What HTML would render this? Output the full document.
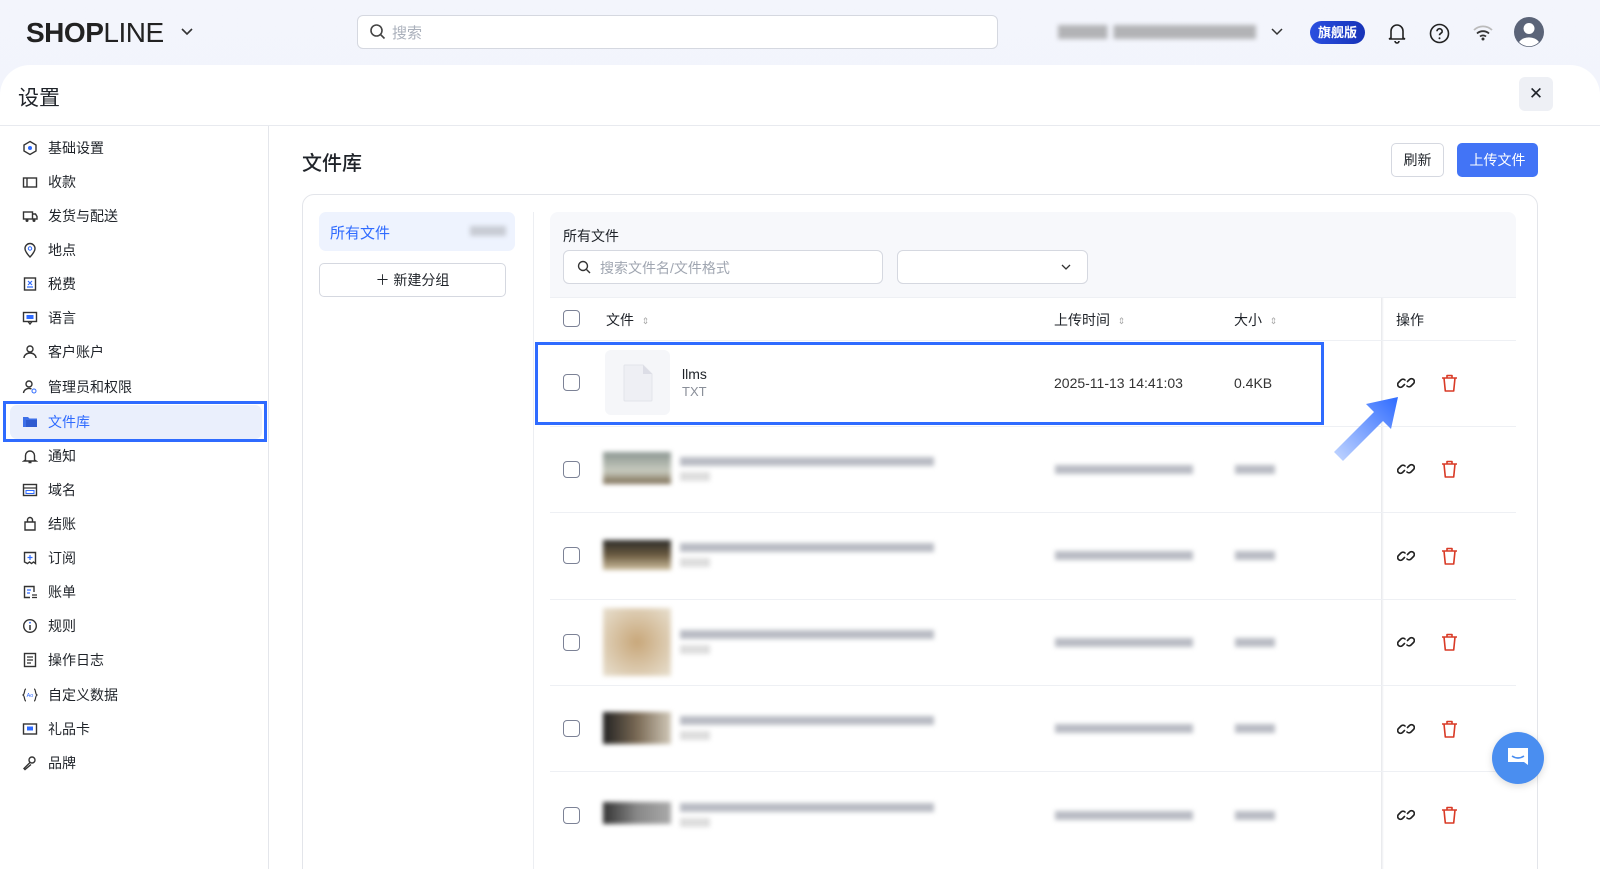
<!DOCTYPE html>
<html style="overflow:hidden;width:1600px;height:869px"><head><meta charset="utf-8"><style>
*{box-sizing:border-box;margin:0;padding:0}
body{width:1600px;height:869px;overflow:hidden;background:linear-gradient(#f3f5fc,#eceff8);font-family:"Liberation Sans","Noto Sans CJK SC",sans-serif;color:#1f2329;position:relative}
.abs{position:absolute}
.logo{left:26px;top:17px;font-size:28px;font-weight:bold;letter-spacing:-0.5px;color:#222}
.logo span{font-weight:normal}
.search{left:357px;top:15px;width:641px;height:34px;border:1px solid #d5d8e0;border-radius:6px;background:#fff;font-size:15px;color:#aab0bb;padding:6px 0 0 34px}
.main{left:0;top:65px;width:1600px;height:804px;background:#fff;border-radius:30px 30px 0 0;overflow:hidden}
.side a{position:absolute;left:22px;font-size:14px;color:#1f2329;display:flex;align-items:center;height:20px}
.side a svg{margin-right:10px}
.btn{border:1px solid #d5d8e0;border-radius:5px;background:#fff;font-size:14px;text-align:center}
.cb{position:absolute;left:563px;width:17px;height:17px;border:1.6px solid #7c8296;border-radius:4px;background:#fff}
.blur{filter:blur(2.5px)}
.bar{position:absolute;background:#b9bcc4;height:9px}
.rowline{position:absolute;left:550px;width:966px;height:1px;background:#eef0f4}
.srt{color:#aaa;font-size:9px;vertical-align:1px}
</style></head><body>
<div class="abs logo">SH<span style="font-weight:bold">O</span>P<span>LINE</span></div>
<svg class="abs" style="left:180px;top:25px" width="14" height="14"><path d="M2 4l5 5 5-5" stroke="#333" stroke-width="1.6" fill="none"/></svg>
<div class="abs search">搜索</div>
<svg class="abs" style="left:369px;top:23px" width="18" height="18"><circle cx="7.5" cy="7.5" r="5.5" stroke="#444" stroke-width="1.6" fill="none"/><path d="M11.5 11.5l4 4" stroke="#444" stroke-width="1.6"/></svg>
<div class="abs blur" style="left:1058px;top:25px;width:198px;height:14px;background:linear-gradient(90deg,#888 0 25%,transparent 25% 28%,#888 28%);opacity:.6"></div>
<svg class="abs" style="left:1270px;top:25px" width="14" height="14"><path d="M2 4l5 5 5-5" stroke="#333" stroke-width="1.5" fill="none"/></svg>
<div class="abs" style="left:1310px;top:21px;width:55px;height:23px;border-radius:12px;background:linear-gradient(90deg,#2a4fe0,#1733b8);color:#fff;font-size:13px;text-align:center;line-height:23px;font-weight:bold">旗舰版</div>
<svg class="abs" style="left:1387px;top:22px" width="20" height="22"><path d="M4 16V9a6 6 0 0112 0v7l2 1H2z M8 19a2 2 0 004 0" stroke="#222" stroke-width="1.6" fill="none"/></svg>
<svg class="abs" style="left:1429px;top:23px" width="21" height="21"><circle cx="10.5" cy="10.5" r="9" stroke="#222" stroke-width="1.6" fill="none"/><path d="M8 8.3a2.6 2.6 0 115 1c-.8 1-2.5 1.3-2.5 3" stroke="#222" stroke-width="1.6" fill="none"/><circle cx="10.5" cy="15.3" r="1" fill="#222"/></svg>
<svg class="abs" style="left:1472px;top:24px" width="22" height="18"><path d="M2 6a13 13 0 0118 0" stroke="#bbb" stroke-width="1.8" fill="none"/><path d="M5 9.5a9 9 0 0112 0" stroke="#333" stroke-width="1.8" fill="none"/><path d="M8 12.5a4.5 4.5 0 016 0" stroke="#333" stroke-width="1.8" fill="none"/><circle cx="11" cy="15" r="1.5" fill="#333"/></svg>
<svg class="abs" style="left:1513px;top:16px" width="32" height="32"><circle cx="16" cy="16" r="15" fill="#5b6478"/><circle cx="16" cy="12.5" r="5.5" fill="#fff"/><path d="M6 26a11 8 0 0120 0a14 14 0 01-20 0z" fill="#fff"/></svg>

<div class="abs main"></div>
<div class="abs" style="left:18px;top:82px;font-size:21px">设置</div>
<div class="abs" style="left:1519px;top:77px;width:34px;height:34px;border-radius:6px;background:#eef0f5;text-align:center;line-height:33px;font-size:17px">✕</div>
<div class="abs" style="left:0;top:125px;width:1600px;height:1px;background:#e8eaef"></div>
<div class="abs" style="left:268px;top:126px;width:1px;height:743px;background:#e4e6eb"></div>

<div class="abs" style="left:3px;top:401px;width:264px;height:41px;border:3px solid #2f6bff"></div>
<div class="abs" style="left:10px;top:405px;width:252px;height:34px;border-radius:7px;background:#eaeffc"></div>
<div class="side">
<a style="top:138px"><svg width="16" height="16"><path d="M8 1.5l6 3.5v6l-6 3.5-6-3.5V5z" stroke="#333" stroke-width="1.4" fill="none"/><circle cx="8" cy="8" r="2" fill="#2f6bff"/></svg>基础设置</a>
<a style="top:172px"><svg width="16" height="16"><rect x="1.5" y="4" width="13" height="9" stroke="#333" stroke-width="1.4" fill="none"/><path d="M5 4v9" stroke="#333" stroke-width="1.4"/></svg>收款</a>
<a style="top:206px"><svg width="16" height="16"><rect x="1.5" y="4" width="9" height="7" stroke="#333" stroke-width="1.4" fill="none"/><path d="M10.5 6h3l1.5 2.5V11h-4.5" stroke="#333" stroke-width="1.4" fill="none"/><circle cx="5" cy="12.5" r="1.5" fill="#333"/><circle cx="12" cy="12.5" r="1.5" fill="#333"/></svg>发货与配送</a>
<a style="top:240px"><svg width="16" height="16"><path d="M8 15s5-5 5-8.5a5 5 0 00-10 0C3 10 8 15 8 15z" stroke="#333" stroke-width="1.4" fill="none"/><circle cx="8" cy="6.5" r="1.7" stroke="#2f6bff" fill="none"/></svg>地点</a>
<a style="top:274px"><svg width="16" height="16"><rect x="2.5" y="2" width="11" height="12" stroke="#333" stroke-width="1.4" fill="none"/><path d="M6 5l4 4M10 5l-4 4M5 11h6" stroke="#2f6bff" stroke-width="1.2"/></svg>税费</a>
<a style="top:308px"><svg width="16" height="16"><rect x="1.5" y="2.5" width="13" height="9" stroke="#333" stroke-width="1.4" fill="none"/><path d="M6 11.5l2 2.5 2-2.5" stroke="#333" stroke-width="1.4" fill="none"/><path d="M4.5 5h7v4h-7z" fill="#2f6bff"/></svg>语言</a>
<a style="top:342px"><svg width="16" height="16"><circle cx="8" cy="5" r="3" stroke="#333" stroke-width="1.4" fill="none"/><path d="M2 14a6 5 0 0112 0" stroke="#333" stroke-width="1.4" fill="none"/></svg>客户账户</a>
<a style="top:377px"><svg width="16" height="16"><circle cx="7" cy="5" r="3" stroke="#333" stroke-width="1.4" fill="none"/><path d="M1.5 14a5.5 5 0 018-4" stroke="#333" stroke-width="1.4" fill="none"/><circle cx="12" cy="12" r="2" stroke="#2f6bff" fill="none"/></svg>管理员和权限</a>
<a style="top:412px;color:#2f6bff"><svg width="16" height="16"><path d="M1 3h5l1.5 1.5H15V13H1z" fill="#3d6fe8"/><rect x="4" y="6" width="11" height="7" fill="#2f5bd0"/></svg>文件库</a>
<a style="top:446px"><svg width="16" height="16"><path d="M3.5 12V7.5a4.5 4.5 0 019 0V12l1.5 1H2z M6.5 14.5h3" stroke="#333" stroke-width="1.4" fill="none"/></svg>通知</a>
<a style="top:480px"><svg width="16" height="16"><rect x="1.5" y="2.5" width="13" height="11" stroke="#333" stroke-width="1.4" fill="none"/><path d="M1.5 6h13" stroke="#333" stroke-width="1.2"/><rect x="4" y="8.5" width="8" height="3" stroke="#2f6bff" fill="none"/></svg>域名</a>
<a style="top:514px"><svg width="16" height="16"><path d="M3 6h10v8H3z M5.5 6V4a2.5 2.5 0 015 0v2" stroke="#333" stroke-width="1.4" fill="none"/></svg>结账</a>
<a style="top:548px"><svg width="16" height="16"><path d="M2.5 2.5h11v11l-2-1.5-2 1.5-2-1.5-2 1.5-3-1.5z" stroke="#333" stroke-width="1.4" fill="none"/><path d="M8 5v5M5.5 7.5h5" stroke="#2f6bff" stroke-width="1.2"/></svg>订阅</a>
<a style="top:582px"><svg width="16" height="16"><path d="M12 8V2.5H2.5v11H8" stroke="#333" stroke-width="1.4" fill="none"/><path d="M5 6h4M5 9h3" stroke="#2f6bff" stroke-width="1.2"/><path d="M10 11h5M10 13.5h5" stroke="#333" stroke-width="1.3"/></svg>账单</a>
<a style="top:616px"><svg width="16" height="16"><circle cx="8" cy="8" r="6.3" stroke="#333" stroke-width="1.4" fill="none"/><path d="M8 7v5" stroke="#333" stroke-width="1.5"/><circle cx="8" cy="4.7" r="0.9" fill="#2f6bff"/></svg>规则</a>
<a style="top:650px"><svg width="16" height="16"><rect x="2.5" y="1.5" width="11" height="13" stroke="#333" stroke-width="1.4" fill="none"/><path d="M5 5h6M5 8h6M5 11h4" stroke="#333" stroke-width="1.2"/></svg>操作日志</a>
<a style="top:685px"><svg width="16" height="16"><path d="M4 2C2 2 3 7 1 8c2 1 1 6 3 6M12 2c2 0 1 5 3 6-2 1-1 6-3 6" stroke="#333" stroke-width="1.2" fill="none"/><text x="8" y="10" font-size="5.5" text-anchor="middle" fill="#2f6bff" font-family="Liberation Sans">Ao</text></svg>自定义数据</a>
<a style="top:719px"><svg width="16" height="16"><rect x="1.5" y="3" width="13" height="10" stroke="#333" stroke-width="1.4" fill="none"/><path d="M5 5.5h6v4H5z" fill="#2f6bff"/></svg>礼品卡</a>
<a style="top:753px"><svg width="16" height="16"><circle cx="10" cy="5" r="3" stroke="#333" stroke-width="1.4" fill="none"/><path d="M8 7.5L2 13.5l1 1 6-5" stroke="#333" stroke-width="1.4" fill="none"/></svg>品牌</a>
</div>

<div class="abs" style="left:302px;top:147px;font-size:20px;font-weight:500">文件库</div>
<div class="abs btn" style="left:1391px;top:143px;width:53px;height:34px;line-height:32px">刷新</div>
<div class="abs" style="left:1457px;top:143px;width:81px;height:34px;line-height:34px;border-radius:5px;background:#4274f6;color:#fff;font-size:14px;text-align:center">上传文件</div>

<div class="abs" style="left:302px;top:194px;width:1236px;height:690px;border:1.5px solid #e3e5ea;border-radius:12px;clip-path:inset(0 0 15px 0)"></div>
<div class="abs" style="left:319px;top:212px;width:196px;height:39px;border-radius:7px;background:#eef3fe;color:#2f6bff;font-size:15px;padding:10px 0 0 11px">所有文件</div>
<div class="abs blur" style="left:470px;top:226px;width:36px;height:10px;background:#c8ccd4"></div>
<div class="abs btn" style="left:319px;top:263px;width:187px;height:34px;line-height:32px">＋ 新建分组</div>
<div class="abs" style="left:533px;top:212px;width:1px;height:657px;background:#eceef2"></div>

<div class="abs" style="left:550px;top:212px;width:966px;height:86px;background:#f7f8fb;border-radius:8px 8px 0 0"></div>
<div class="abs" style="left:563px;top:226px;font-size:14px">所有文件</div>
<div class="abs" style="left:563px;top:250px;width:320px;height:34px;border:1px solid #d5d8e0;border-radius:6px;background:#fff;font-size:14px;color:#a0a6b1;padding:7px 0 0 36px">搜索文件名/文件格式</div>
<svg class="abs" style="left:577px;top:260px" width="15" height="15"><circle cx="6" cy="6" r="4.5" stroke="#333" stroke-width="1.4" fill="none"/><path d="M9.5 9.5l3.5 3.5" stroke="#333" stroke-width="1.4"/></svg>
<div class="abs" style="left:897px;top:250px;width:191px;height:34px;border:1px solid #d5d8e0;border-radius:6px;background:#fff"></div>
<svg class="abs" style="left:1060px;top:261px" width="12" height="12"><path d="M2 4l4 4 4-4" stroke="#333" stroke-width="1.3" fill="none"/></svg>

<div class="rowline" style="top:297px"></div>
<div class="cb" style="top:310px"></div>
<div class="abs" style="left:606px;top:310px;font-size:14px">文件 &nbsp;<span class="srt">⇕</span></div>
<div class="abs" style="left:1054px;top:310px;font-size:14px">上传时间 &nbsp;<span class="srt">⇕</span></div>
<div class="abs" style="left:1234px;top:310px;font-size:14px">大小 &nbsp;<span class="srt">⇕</span></div>
<div class="abs" style="left:1396px;top:310px;font-size:14px">操作</div>
<div class="abs" style="left:1381px;top:298px;width:3px;height:571px;background:linear-gradient(90deg,#e6e7eb,#fff)"></div>

<div class="rowline" style="top:340px"></div>
<div class="rowline" style="top:426px"></div>
<div class="rowline" style="top:512px"></div>
<div class="rowline" style="top:599px"></div>
<div class="rowline" style="top:685px"></div>
<div class="rowline" style="top:771px"></div>

<div class="cb" style="top:374px"></div>
<div class="abs" style="left:605px;top:350px;width:65px;height:65px;border-radius:6px;background:#f5f6f9"></div>
<svg class="abs" style="left:623px;top:364px" width="30" height="38"><path d="M1 2a1 1 0 011-1h18l9 9v26a1 1 0 01-1 1H2a1 1 0 01-1-1z" fill="#eeeff4" stroke="#e2e4ea"/><path d="M20 1v9h9" fill="#dcdde6"/></svg>
<div class="abs" style="left:682px;top:366px;font-size:14px">llms</div>
<div class="abs" style="left:682px;top:384px;font-size:13px;color:#8a8f99">TXT</div>
<div class="abs" style="left:1054px;top:375px;font-size:14px;color:#333">2025-11-13 14:41:03</div>
<div class="abs" style="left:1234px;top:375px;font-size:14px;color:#333">0.4KB</div>
<div class="abs" style="left:535px;top:342px;width:789px;height:83px;border:3.5px solid #2f6bff"></div>

<div class="cb" style="top:461px"></div><div class="cb" style="top:547px"></div><div class="cb" style="top:634px"></div><div class="cb" style="top:720px"></div><div class="cb" style="top:807px"></div>
<div class="abs blur" style="left:603px;top:452px;width:68px;height:32px;background:linear-gradient(#8a9590,#c8cbbf 60%,#7a6a50)"></div>
<div class="abs blur" style="left:603px;top:540px;width:68px;height:30px;background:linear-gradient(#2a2a28,#6a5a40 50%,#cfc0a0)"></div>
<div class="abs blur" style="left:603px;top:608px;width:68px;height:68px;background:radial-gradient(#c8a77a,#e8e0d0)"></div>
<div class="abs blur" style="left:603px;top:712px;width:68px;height:32px;background:linear-gradient(90deg,#222,#7a6a55 50%,#d0c8b8)"></div>
<div class="abs blur" style="left:603px;top:802px;width:68px;height:22px;background:linear-gradient(90deg,#333,#888 50%,#aaa)"></div>
<div class="blur">
<div class="bar" style="left:680px;top:457px;width:254px"></div><div class="bar" style="left:680px;top:472px;width:30px;background:#ddd"></div>
<div class="bar" style="left:680px;top:543px;width:254px"></div><div class="bar" style="left:680px;top:558px;width:30px;background:#ddd"></div>
<div class="bar" style="left:680px;top:630px;width:254px"></div><div class="bar" style="left:680px;top:645px;width:30px;background:#ddd"></div>
<div class="bar" style="left:680px;top:716px;width:254px"></div><div class="bar" style="left:680px;top:731px;width:30px;background:#ddd"></div>
<div class="bar" style="left:680px;top:803px;width:254px"></div><div class="bar" style="left:680px;top:818px;width:30px;background:#ddd"></div>
<div class="bar" style="left:1055px;top:465px;width:138px"></div><div class="bar" style="left:1235px;top:465px;width:40px"></div>
<div class="bar" style="left:1055px;top:551px;width:138px"></div><div class="bar" style="left:1235px;top:551px;width:40px"></div>
<div class="bar" style="left:1055px;top:638px;width:138px"></div><div class="bar" style="left:1235px;top:638px;width:40px"></div>
<div class="bar" style="left:1055px;top:724px;width:138px"></div><div class="bar" style="left:1235px;top:724px;width:40px"></div>
<div class="bar" style="left:1055px;top:811px;width:138px"></div><div class="bar" style="left:1235px;top:811px;width:40px"></div>
</div>

<svg width="0" height="0" style="position:absolute"><defs>
<g id="lk"><path d="M7.5 10.5l-2 2a2.8 2.8 0 01-4-4l2.5-2.5a2.8 2.8 0 014 0" stroke="#222" stroke-width="1.6" fill="none" stroke-linecap="round"/><path d="M10.5 7.5l2-2a2.8 2.8 0 014 4l-2.5 2.5a2.8 2.8 0 01-4 0" stroke="#222" stroke-width="1.6" fill="none" stroke-linecap="round"/></g>
<g id="tr"><path d="M2 5h15M7 5V2.5h5V5M4 5l1.3 13h8.4L15 5" stroke="#d93a26" stroke-width="1.6" fill="none" stroke-linejoin="round"/></g>
</defs></svg>
<svg class="abs" style="left:1397px;top:374px" width="18" height="18"><use href="#lk"/></svg>
<svg class="abs" style="left:1397px;top:460px" width="18" height="18"><use href="#lk"/></svg>
<svg class="abs" style="left:1397px;top:547px" width="18" height="18"><use href="#lk"/></svg>
<svg class="abs" style="left:1397px;top:633px" width="18" height="18"><use href="#lk"/></svg>
<svg class="abs" style="left:1397px;top:720px" width="18" height="18"><use href="#lk"/></svg>
<svg class="abs" style="left:1397px;top:806px" width="18" height="18"><use href="#lk"/></svg>
<svg class="abs" style="left:1440px;top:373px" width="19" height="20"><use href="#tr"/></svg>
<svg class="abs" style="left:1440px;top:459px" width="19" height="20"><use href="#tr"/></svg>
<svg class="abs" style="left:1440px;top:546px" width="19" height="20"><use href="#tr"/></svg>
<svg class="abs" style="left:1440px;top:632px" width="19" height="20"><use href="#tr"/></svg>
<svg class="abs" style="left:1440px;top:719px" width="19" height="20"><use href="#tr"/></svg>
<svg class="abs" style="left:1440px;top:805px" width="19" height="20"><use href="#tr"/></svg>

<svg class="abs" style="left:1330px;top:392px" width="75" height="75"><defs><linearGradient id="ag" x1="0" y1="1" x2="1" y2="0"><stop offset="0" stop-color="#c4d7ff"/><stop offset="1" stop-color="#2f6bff"/></linearGradient></defs><path d="M4 60L44 20L36 12L68 5L61 37L53 29L13 69z" fill="url(#ag)"/></svg>

<div class="abs" style="left:1492px;top:732px;width:52px;height:52px;border-radius:50%;background:#4a8ef0;box-shadow:0 2px 8px rgba(0,0,0,.15)"></div>
<svg class="abs" style="left:1505px;top:745px" width="26" height="26"><path d="M3 3h20v17l-4-3H3z" fill="#fff"/><path d="M7 11q6 4 12 0" stroke="#4a8ef0" stroke-width="1.6" fill="none"/></svg>
</body></html>
